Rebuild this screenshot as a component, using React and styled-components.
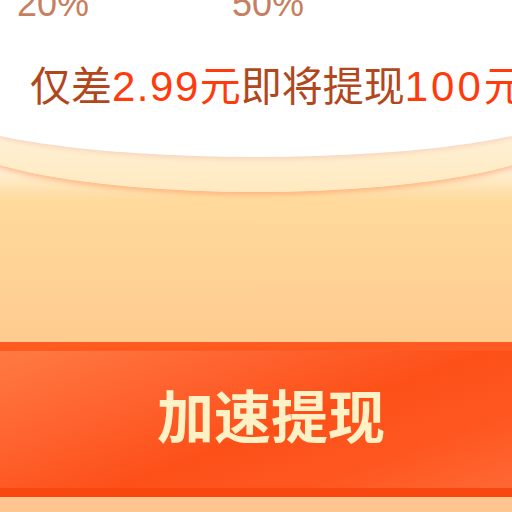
import React from "react";
import styled, { createGlobalStyle } from "styled-components";

const Global = createGlobalStyle`
  html, body { margin: 0; padding: 0; }
  body { font-family: "Noto Sans CJK SC", "Noto Sans", sans-serif; }
  #root { width: 512px; height: 512px; overflow: hidden; }
`;

const Page = styled.div`
  width: 512px;
  height: 512px;
  overflow: hidden;
  display: flex;
  flex-direction: column;
  background: linear-gradient(to bottom, #fff 0px, #fff 150px, #ffda9c 200px, #ffcb8f 340px, #ffc590 512px);
`;

const Plate = styled.div`
  margin: 0 -60px;
  padding-bottom: 35px;
  background: linear-gradient(to bottom, #fff4dc 60%, #ffe9c0 100%);
  border-bottom-left-radius: 50% 65px;
  border-bottom-right-radius: 50% 65px;
  box-shadow: 0 3px 5px rgba(255, 140, 80, 0.5);
  position: relative;
  z-index: 1;
`;

const Card = styled.div`
  height: 157px;
  padding: 0 60px;
  background: #fff;
  border-bottom-left-radius: 50% 51px;
  border-bottom-right-radius: 50% 51px;
  box-shadow: 0 2px 5px rgba(236, 180, 170, 0.45);
  display: flex;
  flex-direction: column;
`;

const StatsRow = styled.div`
  display: flex;
  margin-top: -14px;
  padding-left: 17px;
  gap: 143px;
`;

const Stat = styled.span`
  font-family: "Liberation Sans", Arial, sans-serif;
  font-size: 36px;
  line-height: 36px;
  color: #c67f60;
`;

const Message = styled.div`
  margin-top: 41px;
  padding-left: 30px;
  font-size: 41px;
  line-height: 41px;
  color: #b1471c;
  white-space: nowrap;
`;

const Num = styled.span`
  color: #ff3a0c;
  font-family: "Liberation Sans", Arial, sans-serif;
  font-size: 42px;
  letter-spacing: ${(p) => p.$spacing}px;
`;

const Red = styled.span`
  color: #ff3a0c;
`;

const Button = styled.div`
  margin-top: 150px;
  height: 137px;
  border-top: 9px solid #ff5a22;
  border-bottom: 9px solid #f8470f;
  background: linear-gradient(160deg, #ff7a42 0%, #ff6430 28%, #fd5019 55%, #ff5720 78%, #ff6834 100%);
  display: flex;
  align-items: center;
  justify-content: center;
  flex-shrink: 0;
`;

const ButtonText = styled.span`
  font-size: 57px;
  font-weight: 700;
  line-height: 57px;
  color: #fff1c6;
  padding-left: 30px;
  padding-bottom: 12px;
`;

export default function App() {
  return (
    <>
      <Global />
      <Page>
        <Plate>
          <Card>
            <StatsRow>
              <Stat>20%</Stat>
              <Stat>50%</Stat>
            </StatsRow>
            <Message>
              仅差<Num $spacing={1.5}>2.99</Num><Red>元</Red>即将提现<Num $spacing={3}>100</Num><Red>元</Red>
            </Message>
          </Card>
        </Plate>
        <Button>
          <ButtonText>加速提现</ButtonText>
        </Button>
      </Page>
    </>
  );
}
